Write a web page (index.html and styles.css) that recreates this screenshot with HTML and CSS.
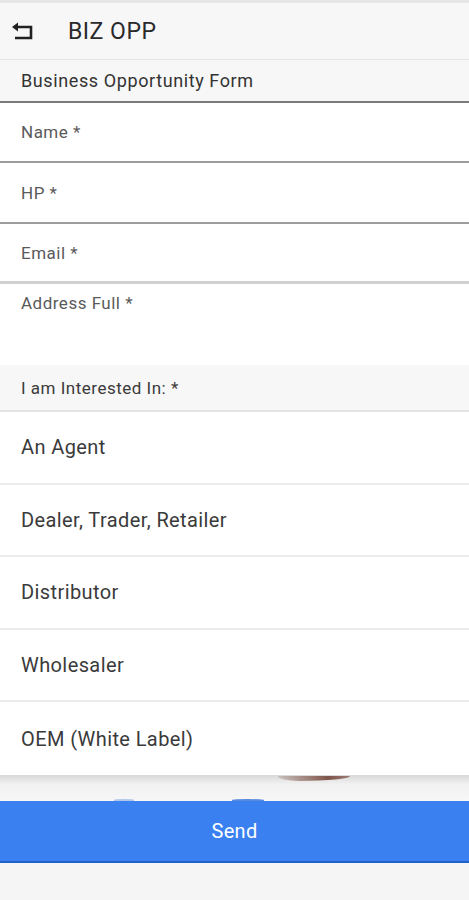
FILE: index.html
```html
<!DOCTYPE html>
<html lang="en">
<head>
  <meta charset="UTF-8" />
  <meta name="viewport" content="width=device-width, initial-scale=1.0" />
  <title>BIZ OPP</title>
  <link rel="stylesheet" href="styles.css">
</head>
<body>
  <header class="topbar">
    <a class="back" href="#">
      <svg width="24" height="22" viewBox="0 0 24 22">
        <path d="M3 6 H20 V17 H4" fill="none" stroke="#222" stroke-width="2.6"/>
        <path d="M1 6 L7 1.5 V10.5 Z" fill="#222"/>
      </svg>
    </a>
    <h1>BIZ OPP</h1>
  </header>

  <div class="section-title">Business Opportunity Form</div>

  <form class="form">
    <div class="field">Name *</div>
    <div class="field field-hp">HP *</div>
    <div class="field field-last">Email *</div>
    <div class="field field-area">Address Full *</div>

    <div class="section-title section-interest">I am Interested In: *</div>

    <ul class="options">
      <li>An Agent</li>
      <li>Dealer, Trader, Retailer</li>
      <li>Distributor</li>
      <li>Wholesaler</li>
      <li>OEM (White Label)</li>
    </ul>
  </form>

  <div class="backdrop">
    <span class="blob"></span>
    <span class="dot dot-a"></span>
    <span class="dot dot-b"></span>
  </div>

  <button class="send">Send</button>

  <div class="bottom"></div>
</body>
</html>
```

FILE: styles.css
```css
* {
  margin: 0;
  padding: 0;
  box-sizing: border-box;
}

body {
  font-family: Roboto, 'Noto Sans', sans-serif;
  color: #333;
  background: #f6f6f6;
  width: 469px;
  height: 900px;
  overflow: hidden;
  border-top: 3px solid #e6e6e6;
}

.topbar {
  height: 57px;
  display: flex;
  align-items: center;
  background: #f7f7f7;
  border-bottom: 1px solid #e4e4e4;
}

.back {
  display: flex;
  margin-left: 11px;
  margin-top: 2px;
}

.topbar h1 {
  font-size: 23px;
  font-weight: 400;
  color: #2a2a2a;
  margin-left: 33px;
  letter-spacing: 0.5px;
}

.section-title {
  height: 43px;
  display: flex;
  align-items: center;
  padding-left: 21px;
  font-size: 18px;
  letter-spacing: 0.6px;
  color: #333;
  background: #f7f7f7;
  border-bottom: 2px solid #7a7a7a;
}

.form {
  background: #fff;
}

.field {
  height: 60px;
  display: flex;
  align-items: center;
  padding-left: 21px;
  font-size: 17px;
  letter-spacing: 0.5px;
  color: #5a5a5a;
  border-bottom: 2px solid #9c9c9c;
}

.field-hp {
  height: 61px;
}

.field-last {
  border-bottom: 3px solid #d0d0d0;
}

.field-area {
  height: 81px;
  align-items: flex-start;
  padding-top: 9px;
  border-bottom: none;
}

.section-interest {
  height: 47px;
  font-size: 17px;
  letter-spacing: 0.5px;
  color: #3a3a3a;
  border-bottom: 2px solid #e2e2e2;
}

.options {
  list-style: none;
}

.options li {
  height: 72.6px;
  display: flex;
  align-items: center;
  padding-left: 21px;
  font-size: 20px;
  letter-spacing: 0.4px;
  color: #3a3a3a;
  border-bottom: 2px solid #ececec;
}

.options li:last-child {
  border-bottom: none;
}

.backdrop {
  height: 26px;
  position: relative;
  background: linear-gradient(#d8d8d8, #f1f1f1 35%, #f7f7f7);
}

/* brown streak in the photo behind the form */
.blob {
  position: absolute;
  left: 278px;
  top: 1px;
  width: 72px;
  height: 5px;
  border-radius: 0 0 70% 30% / 0 0 100% 100%;
  background: linear-gradient(90deg, rgba(110, 68, 54, 0.2), rgba(110, 60, 48, 0.85) 70%, rgba(110, 60, 48, 0.6));
}

.dot {
  position: absolute;
  bottom: 0;
  height: 2px;
  border-radius: 50% 50% 0 0;
  background: #2f6fd8;
}

.dot-a {
  left: 114px;
  width: 20px;
  opacity: 0.35;
}

.dot-b {
  left: 232px;
  width: 32px;
  opacity: 0.8;
}

.send {
  display: block;
  width: 100%;
  height: 62px;
  border: none;
  border-bottom: 2px solid #1f62c9;
  background: #3a80f0;
  color: #fff;
  font-family: Roboto, 'Noto Sans', sans-serif;
  font-size: 20px;
  letter-spacing: 0.3px;
}

.bottom {
  height: 40px;
  background: #f5f5f5;
}
```
